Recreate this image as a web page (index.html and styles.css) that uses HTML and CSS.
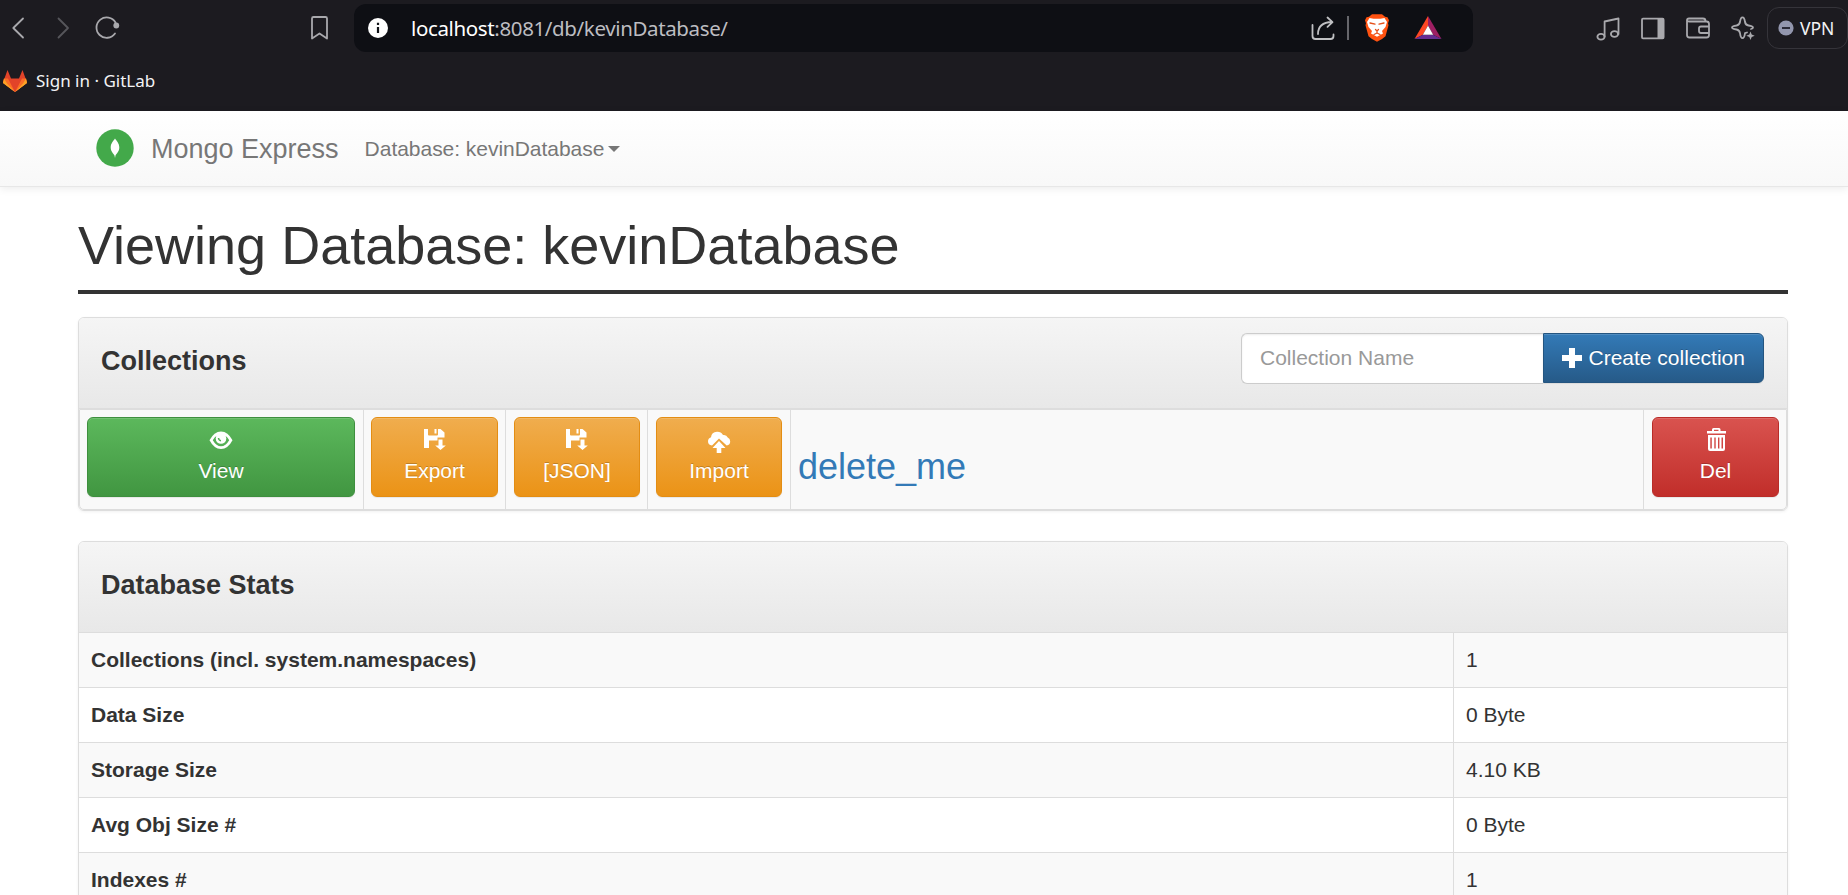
FILE: index.html
```html
<!DOCTYPE html>
<html lang="en">
<head>
<meta charset="utf-8">
<title>kevinDatabase - Mongo Express</title>
<link rel="stylesheet" href="styles.css">
</head>
<body>
<header class="browser">
  <div class="toolbar">
    <svg class="tool back" viewBox="4 14 28 28"><path d="M23 18.500 13.300 28 23 37.500"/></svg>
    <svg class="tool forward" viewBox="49 14 28 28"><path d="M58.500 18.500 68 28l-9.500 9.500"/></svg>
    <svg class="tool reload" viewBox="93 14 28 28"><path d="M115 33.500A10.200 10.200 0 1 1 115.500 22.500"/><circle class="fill" cx="116.300" cy="25.500" r="2.900"/></svg>
    <svg class="tool bookmark" viewBox="305 14 28 28"><path d="M312 18.500q0-1.500 1.500-1.500h12q1.500 0 1.500 1.500v20l-7.500-5-7.500 5z"/></svg>
    <div class="address">
      <svg class="tool info" viewBox="364 14 28 28"><circle cx="378" cy="28" r="10" fill="#fff" stroke="none"/><path d="M378 27v6M378 22.700v2.300" stroke="#111318" stroke-width="2.200"/></svg>
      <div class="url"><span class="host">localhost</span>:8081/db/kevinDatabase/</div>
      <svg class="tool share" viewBox="1309 14 28 28"><path d="M1312.500 25v11q0 3 3 3h15q3 0 3-3v-1.500M1318 34q0-11.500 14-12M1327.500 17.500l5 4.700-5 4.700"/></svg>
      <span class="divider"></span>
      <svg class="tool brave" viewBox="1363 14 28 28"><path fill="#ff5210" stroke="none" d="M1372 14.300h10l3 2.500 2.500.5 1.500 3-1 3 .5 2-3 11q-3 3-8.500 5.500-5.500-2.500-8.500-5.500l-3-11 .5-2-1-3 1.500-3 2.500-.5z"/><path fill="#fff" stroke="none" d="M1369.500 18l4 .8h7l4-.8 2.500 4-1.500 5-3.500 4 1 2.500-6 3.200-6-3.200 1-2.500-3.500-4-1.500-5z"/><path d="M1370 23l5 1.200M1384 23l-5 1.200M1375.500 29.500l1.500 1.500 1.500-1.500M1377 31v2M1374 34.500l3-1.500 3 1.500" stroke="#e5501a" stroke-width="1.300"/></svg>
      <svg class="tool rewards" viewBox="1414 14 28 28"><path fill="#ff4724" stroke="none" d="M1428 16v9.500l-5.200 9.300-8.300 4.200z"/><path fill="#9e1f63" stroke="none" d="M1428 16l13.500 23-8.300-4.200-5.200-9.300z"/><path fill="#662d91" stroke="none" d="M1414.500 39l8.300-4.200h10.400l8.300 4.200z"/><path fill="#fff" stroke="none" d="M1428 25.500l5.200 9.300h-10.400z"/></svg>
    </div>
    <svg class="tool music" viewBox="1594 14 28 28"><ellipse cx="1601" cy="36.800" rx="3.600" ry="2.900"/><ellipse cx="1614.500" cy="34" rx="3.600" ry="2.900"/><path d="M1604.600 36.500V21.500L1618.500 18.500v15.500"/></svg>
    <svg class="tool sidebar" viewBox="1639 14 28 28"><rect x="1642" y="18.700" width="21.600" height="19.600" rx="1"/><path class="fill" d="M1657.500 18.500h6.500v20h-6.500z"/></svg>
    <svg class="tool wallet" viewBox="1684 14 28 28"><path d="M1687 20.500q0-2 2-2h14q2.500 0 2.500 2.500M1687 20v15q0 2.500 2.500 2.500h17q2.500 0 2.500-2.500v-11q0-2.500-2.500-2.500h-17q-2.500 0-2.500-1.500M1709 26.500h-8q-2 0-2 2v2.500q0 2 2 2h8"/></svg>
    <svg class="tool sparkle" viewBox="1729 14 28 28"><path d="M1747 32.500l-2 .7q-.6 5-2.500 5t-2.500-5q-.5-3-3.500-3.700-4.500-.7-4.500-2t4.500-2q3-.6 3.500-3.500.6-4.700 2.500-4.700t2.500 4.700q.5 3 3.500 3.500 4.500.7 4.500 2 0 1-2 1.500"/><path class="fill" d="M1750.500 31.500l1.200 3 3 1.200-3 1.200-1.200 3-1.200-3-3-1.200 3-1.200z"/></svg>
    <div class="vpn">
      <svg class="vpn-dot" viewBox="0 0 16 16"><circle cx="8" cy="8" r="7.600" fill="#9296ad"/><path d="M4 8h8" stroke="#292936" stroke-width="2"/></svg>
      <span>VPN</span>
    </div>
  </div>
  <div class="bookmarks">
    <svg class="gitlab" viewBox="0 0 24 22"><path fill="#e24329" d="M4.500 0 8 8.500h8L19.500 0 24 12.500 12 22 0 12.500z"/><path fill="#1c1b20" d="M6.500 0 9 8h6l2.500-8z"/><path fill="#fc6d26" d="M1 8.500h4L12 22 0 13zM23 8.500h-4L12 22l12-9z"/><path fill="#fca326" d="M1 8.500 0 13l12 9-8-8.500zM23 8.500l1 4.500-12 9 8-8.500z"/></svg>
    <span>Sign in · GitLab</span>
  </div>
</header>

<nav class="navbar">
  <svg class="logo" viewBox="0 0 38 38"><circle cx="19" cy="19" r="18.700" fill="#43a94a"/><path fill="#fff" d="M19 9.500c1.500 2.500 4.300 4.600 4.300 9 0 4-2.800 6.200-3.800 8l-.5 2.500-.5-2.500c-1-1.800-3.800-4-3.800-8 0-4.400 2.800-6.500 4.300-9z"/></svg>
  <span class="brand">Mongo Express</span>
  <span class="menu">Database: kevinDatabase<i class="caret"></i></span>
</nav>

<main class="container">
  <h1>Viewing Database: kevinDatabase</h1>

  <section class="panel">
    <div class="panel-heading">
      <h4>Collections</h4>
      <div class="create">
        <input type="text" placeholder="Collection Name">
        <button class="btn primary"><svg viewBox="0 0 20 20"><path d="M7 0h6v7h7v6h-7v7H7v-7H0V7h7z"/></svg>Create collection</button>
      </div>
    </div>
    <div class="collection">
      <div class="cell"><button class="btn success"><svg viewBox="0 0 30 30"><path d="M3.500 14.300Q8 5.500 15 5.500t11.500 8.800Q22 23 15 23T3.500 14.300z"/><path class="eye-hole" d="M6.800 14.300Q8.300 11.300 10.300 10l9.400 0q2 1.300 3.500 4.300-3.500 6-8.200 6t-8.200-6z"/><circle cx="15" cy="12.500" r="5.300"/><path class="eye-glint" d="M12.500 12q.2 2.400 2.500 2.700"/></svg>View</button></div>
      <div class="cell"><button class="btn warning"><svg viewBox="0 1 30 30"><path fill-rule="evenodd" d="M4 4h4v5.500q0 1 1 1h8q1 0 1-1V4h2.500L24.500 7.500v5h-7v3H9V23H4zM14.500 4h2v4.500h-2zM18.500 14.500h4v6h3.300L20.500 25l-5.300-4.500h3.300z"/></svg>Export</button></div>
      <div class="cell inset"><button class="btn warning"><svg viewBox="0 1 30 30"><path fill-rule="evenodd" d="M4 4h4v5.500q0 1 1 1h8q1 0 1-1V4h2.500L24.500 7.500v5h-7v3H9V23H4zM14.500 4h2v4.500h-2zM18.500 14.500h4v6h3.300L20.500 25l-5.300-4.500h3.300z"/></svg>[JSON]</button></div>
      <div class="cell inset"><button class="btn warning"><svg viewBox="0 -1 30 30"><path d="M8 18.500q-4-.5-4-4.200 0-3 3-4Q7.500 5 13 4.700q4-.2 6 3.300 3.500-.6 4.700 2.500 2.500 1 2.500 4 0 3.500-3.500 4L15 11.500zM15 14l6.500 7h-4.200v5h-4.600v-5H8.500z"/></svg>Import</button></div>
      <div class="cell name"><a>delete_me</a></div>
      <div class="cell inset"><button class="btn danger"><svg viewBox="0 -1 30 30"><path fill-rule="evenodd" d="M11 4V2.500Q11 1 12.500 1h5.500q1.500 0 1.500 1.500V4H25v2.500H6V4zm2 0h4.500V2.700H13zM7 8h17v14q0 2-2 2H9q-2 0-2-2zm2.300 2.500v11h1.500v-11zm4 0v11h1.400v-11zm3.700 0v11h1.400v-11zm3.500 0v11H22v-11z"/></svg>Del</button></div>
    </div>
  </section>

  <section class="panel">
    <div class="panel-heading"><h4>Database Stats</h4></div>
    <table class="stats">
      <tr><th>Collections (incl. system.namespaces)</th><td>1</td></tr>
      <tr><th>Data Size</th><td>0 Byte</td></tr>
      <tr><th>Storage Size</th><td>4.10 KB</td></tr>
      <tr><th>Avg Obj Size #</th><td>0 Byte</td></tr>
      <tr><th>Indexes #</th><td>1</td></tr>
    </table>
  </section>
</main>
</body>
</html>
```
FILE: styles.css
```css
* { box-sizing: border-box; }
body {
  display: flex;
  flex-direction: column;
  height: 895px;
  margin: 0;
  overflow: hidden;
  background: #fff;
  color: #333;
  font: 21px/30px "Liberation Sans", Arial, sans-serif;
}
svg { flex: none; }

/* Browser chrome */
.browser {
  flex: none;
  height: 111px;
  background: #1c1b20;
  color: #f3f3f5;
  font-family: "Noto Sans", "Open Sans", sans-serif;
}
.toolbar {
  display: flex;
  align-items: center;
  height: 56px;
  padding-left: 4px;
}
.tool {
  width: 28px;
  height: 28px;
  fill: none;
  stroke: #a9a9ad;
  stroke-width: 1.8;
  stroke-linecap: round;
  stroke-linejoin: round;
}
.tool .fill { fill: #a9a9ad; stroke: none; }
.forward { margin-left: 17px; stroke: #56565b; }
.reload { margin-left: 16px; }
.bookmark { margin-left: 184px; }
.address {
  display: flex;
  align-items: center;
  width: 1119px;
  height: 48px;
  margin-left: 21px;
  padding-left: 10px;
  border-radius: 12px;
  background: #0e0f14;
}
.info { stroke-linecap: butt; }
.url {
  width: 917px;
  padding-left: 19px;
  color: #bdbdc1;
  font-size: 20.5px;
  letter-spacing: -.37px;
  white-space: nowrap;
}
.host { color: #fff; }
.share { stroke: #c0c0c3; }
.divider { width: 2px; height: 24px; margin: 0 14px 0 10px; background: #66666b; }
.rewards { margin-left: 23px; }
.music { margin-left: 121px; }
.sidebar, .wallet, .sparkle { margin-left: 17px; }
.vpn {
  display: flex;
  align-items: center;
  gap: 6px;
  width: 81px;
  height: 42px;
  margin-left: 10px;
  padding-left: 10px;
  border: 1px solid #35343a;
  border-radius: 12px;
  font-size: 17.5px;
}
.vpn-dot { width: 16px; height: 16px; }
.bookmarks {
  display: flex;
  align-items: center;
  gap: 9px;
  height: 50px;
  padding-left: 3px;
  font-size: 17px;
}
.gitlab { width: 24px; height: 22px; }

/* Page navigation */
.navbar {
  display: flex;
  flex: none;
  align-items: center;
  height: 76px;
  padding: 0 0 1px 96px;
  border-bottom: 1px solid #e7e7e7;
  background: linear-gradient(#fff, #f8f8f8);
  box-shadow: 0 2px 8px rgba(0, 0, 0, .075);
  color: #777;
  z-index: 1;
}
.logo { width: 38px; height: 38px; }
.brand { margin: 1px 0 0 17px; font-size: 27px; }
.menu { display: flex; align-items: center; margin: 1px 0 0 26px; letter-spacing: -.03px; }
.caret {
  margin-left: 4px;
  border-top: 6px solid #777;
  border-left: 6px solid transparent;
  border-right: 6px solid transparent;
}

/* Content */
.container { flex: 1; min-height: 0; padding: 29px 60px 0 78px; overflow: hidden; }
h1 {
  height: 78px;
  margin: 0 0 23px;
  border-bottom: 4px solid #333;
  font-size: 54px;
  font-weight: 400;
  line-height: 59px;
}
.panel {
  margin-bottom: 30px;
  border: 1px solid #ddd;
  border-radius: 6px;
  box-shadow: 0 1px 3px rgba(0, 0, 0, .06);
}
.panel-heading {
  display: flex;
  justify-content: space-between;
  height: 91px;
  padding: 15px 23px 0 22px;
  border-bottom: 1px solid #ddd;
  border-radius: 5px 5px 0 0;
  background: linear-gradient(#f5f5f5, #e8e8e8);
}
h4 { margin: 13px 0 0; font-size: 27px; line-height: 30px; }
.create { display: flex; }
input {
  width: 302px;
  height: 51px;
  padding: 0 18px 2px;
  border: 1px solid #ccc;
  border-right: 0;
  border-radius: 6px 0 0 6px;
  background: #fff;
  box-shadow: inset 0 1px 2px rgba(0, 0, 0, .075);
  font: inherit;
}
input::placeholder { color: #999; opacity: 1; }
.btn {
  display: block;
  width: 100%;
  height: 80px;
  padding: 8px 0 10px;
  border: 1px solid;
  border-radius: 6px;
  box-shadow: inset 0 1px 0 rgba(255, 255, 255, .15), 0 1px 1px rgba(0, 0, 0, .075);
  color: #fff;
  font: inherit;
  text-align: center;
  text-shadow: 0 -1px 0 rgba(0, 0, 0, .2);
}
.btn svg { display: block; width: 30px; height: 30px; margin: 0 auto; fill: #fff; }
.btn .eye-hole { fill: #55b055; }
.btn .eye-glint { fill: none; stroke: #55b055; stroke-width: 1.5; }
.success { border-color: #3e8f3e; background: linear-gradient(#5cb85c, #419641); }
.warning { border-color: #e38d13; background: linear-gradient(#f0ad4e, #eb9316); }
.danger { border-color: #b92c28; background: linear-gradient(#d9534f, #c12e2a); }
.primary {
  display: flex;
  align-items: center;
  gap: 7px;
  width: 221px;
  height: 50px;
  padding: 0 0 1px 17.5px;
  border-color: #245580;
  border-radius: 0 6px 6px 0;
  background: linear-gradient(#337ab7, #265a88);
}
.primary svg { width: 20px; height: 20px; margin: 0; }
.collection {
  display: grid;
  grid-template-columns: 283px 142px 142px 143px 853px 1fr;
  height: 101px;
  border: 1px solid #ddd;
  border-radius: 0 0 5px 5px;
  background: #f9f9f9;
}
.cell { padding: 7px 7px 0; border-left: 1px solid #ddd; }
.cell:first-child { padding-right: 8px; border-left: 0; }
.inset { padding-left: 8px; }
.inset + .inset { padding-right: 8px; }
.name { font-size: 36px; line-height: 40px; padding-top: 37px; }
.name a { color: #337ab7; }
.stats { width: 100%; border-collapse: separate; border-spacing: 0; }
.stats tr:nth-child(odd) { background: #f9f9f9; }
.stats th, .stats td { height: 55px; padding: 0 12px; border-bottom: 1px solid #ddd; text-align: left; }
.stats td { width: 334px; border-left: 1px solid #ddd; }
```
